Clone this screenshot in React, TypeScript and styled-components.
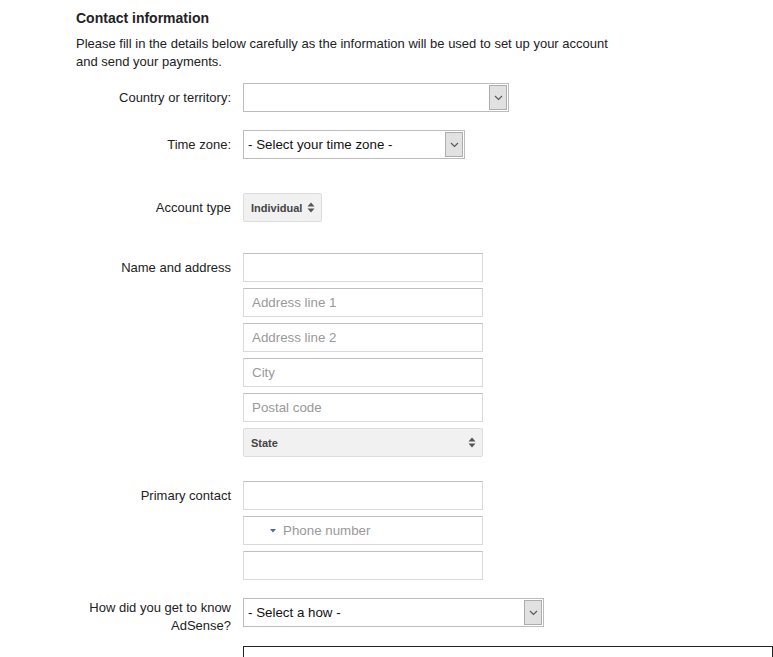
import React from "react";
import styled, { createGlobalStyle } from "styled-components";

const GlobalStyle = createGlobalStyle`
  html, body {
    margin: 0;
    padding: 0;
    overflow: hidden;
    background: #fff;
  }
  body {
    font-family: "Liberation Sans", Arial, sans-serif;
    color: #222;
  }
`;

const Page = styled.div`
  padding: 9px 0 0 76px;
  width: 697px;
`;

const Title = styled.h2`
  margin: 0;
  font-size: 14px;
  line-height: 18px;
  font-weight: bold;
  color: #222;
`;

const Intro = styled.p`
  margin: 8px 0 0;
  font-size: 13px;
  line-height: 18px;
  color: #222;
  width: 545px;
`;

const Row = styled.div<{ $top: number }>`
  display: flex;
  align-items: flex-start;
  gap: 12px;
  margin-top: ${({ $top }) => $top}px;
`;

const Label = styled.div<{ $pad?: number }>`
  width: 155px;
  flex: none;
  text-align: right;
  font-size: 13px;
  line-height: 18px;
  color: #222;
  padding-top: ${({ $pad }) => ($pad === undefined ? 6 : $pad)}px;
`;

const Fields = styled.div`
  display: flex;
  flex-direction: column;
  gap: 6px;
`;

const TextBox = styled.input<{ $w?: number; $dark?: boolean }>`
  box-sizing: border-box;
  width: ${({ $w }) => $w || 240}px;
  height: 29px;
  margin: 0;
  padding: 0 8px;
  border: 1px solid ${({ $dark }) => ($dark ? "#222" : "#d9d9d9")};
  border-top-color: ${({ $dark }) => ($dark ? "#222" : "#c0c0c0")};
  font-family: "Liberation Sans", Arial, sans-serif;
  font-size: 13.33px;
  color: #222;
  background: #fff;
  outline: none;
  &::placeholder {
    color: #999;
  }
`;

const Select = styled.div<{ $w: number }>`
  box-sizing: border-box;
  width: ${({ $w }) => $w}px;
  height: 29px;
  border: 1px solid #bcbcbc;
  background: #fff;
  display: flex;
  align-items: stretch;
  font-size: 13.33px;
  color: #111;
`;

const SelectText = styled.span`
  flex: 1;
  padding-left: 4px;
  line-height: 27px;
  white-space: nowrap;
`;

const ArrowBox = styled.span`
  box-sizing: border-box;
  width: 18px;
  margin: 1px;
  background: #e1e1e1;
  border: 1px solid #adadad;
  display: flex;
  align-items: center;
  justify-content: center;
`;

const GreyButton = styled.div<{ $w: number }>`
  box-sizing: border-box;
  width: ${({ $w }) => $w}px;
  height: 29px;
  border: 1px solid #dcdcdc;
  border-radius: 2px;
  background: #f1f1f1;
  display: flex;
  align-items: center;
  justify-content: space-between;
  padding: 0 6px 0 7px;
  font-size: 11px;
  font-weight: bold;
  color: #444;
`;

const PhoneBox = styled.div`
  box-sizing: border-box;
  width: 240px;
  height: 29px;
  border: 1px solid #d9d9d9;
  border-top-color: #c0c0c0;
  display: flex;
  align-items: center;
  padding-left: 26px;
  gap: 7px;
  font-size: 13.33px;
  color: #999;
`;

const Chevron = () => (
  <svg width="9" height="6" viewBox="0 0 9 6">
    <path d="M1 1 L4.5 4.5 L8 1" fill="none" stroke="#555" strokeWidth="1.1" />
  </svg>
);

const UpDown = ({ color = "#555" }: { color?: string }) => (
  <svg width="8" height="11" viewBox="0 0 8 11">
    <path d="M0.5 4.5 L4 0.5 L7.5 4.5 Z" fill={color} />
    <path d="M0.5 6.5 L4 10.5 L7.5 6.5 Z" fill={color} />
  </svg>
);

const SmallCaret = () => (
  <svg width="6" height="4" viewBox="0 0 6 4">
    <path d="M0 0 L6 0 L3 3.5 Z" fill="#4a67a8" />
  </svg>
);

export default function App() {
  return (
    <Page>
      <GlobalStyle />
      <Title>Contact information</Title>
      <Intro>
        Please fill in the details below carefully as the information will be used to set up your account
        and send your payments.
      </Intro>

      <Row $top={12}>
        <Label>Country or territory:</Label>
        <Select $w={266}>
          <SelectText />
          <ArrowBox>
            <Chevron />
          </ArrowBox>
        </Select>
      </Row>

      <Row $top={18}>
        <Label>Time zone:</Label>
        <Select $w={222}>
          <SelectText>- Select your time zone -</SelectText>
          <ArrowBox>
            <Chevron />
          </ArrowBox>
        </Select>
      </Row>

      <Row $top={34}>
        <Label>Account type</Label>
        <GreyButton $w={79}>
          Individual
          <UpDown />
        </GreyButton>
      </Row>

      <Row $top={31}>
        <Label>Name and address</Label>
        <Fields>
          <TextBox />
          <TextBox placeholder="Address line 1" />
          <TextBox placeholder="Address line 2" />
          <TextBox placeholder="City" />
          <TextBox placeholder="Postal code" />
          <GreyButton $w={240}>
            State
            <UpDown />
          </GreyButton>
        </Fields>
      </Row>

      <Row $top={24}>
        <Label>Primary contact</Label>
        <Fields>
          <TextBox />
          <PhoneBox>
            <SmallCaret />
            Phone number
          </PhoneBox>
          <TextBox />
        </Fields>
      </Row>

      <Row $top={18}>
        <Label $pad={1}>
          How did you get to know
          <br />
          AdSense?
        </Label>
        <Select $w={301}>
          <SelectText>- Select a how -</SelectText>
          <ArrowBox>
            <Chevron />
          </ArrowBox>
        </Select>
      </Row>

      <Row $top={11}>
        <Label $pad={9}>AdSense Email</Label>
        <TextBox $w={560} $dark />
      </Row>
    </Page>
  );
}
